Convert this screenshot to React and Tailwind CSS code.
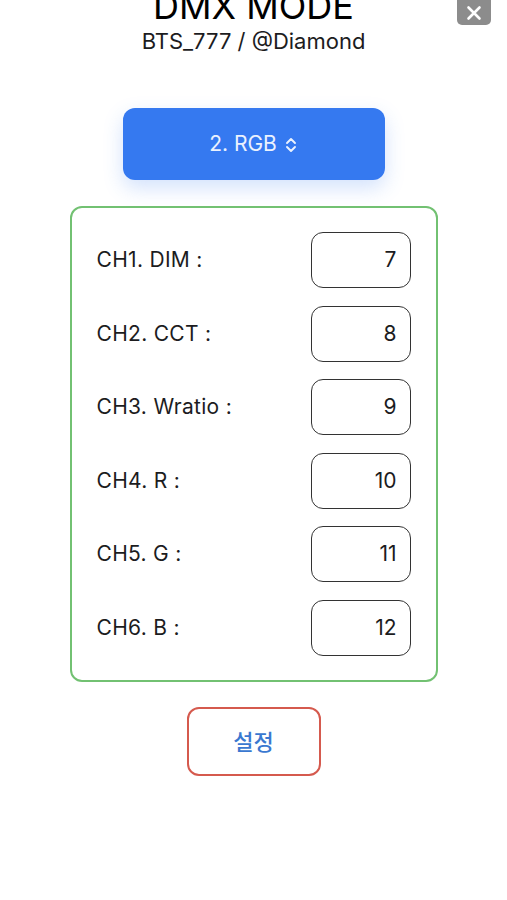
import React from "react";

const rows = [
  ["CH1. DIM :", "7"],
  ["CH2. CCT :", "8"],
  ["CH3. Wratio :", "9"],
  ["CH4. R :", "10"],
  ["CH5. G :", "11"],
  ["CH6. B :", "12"],
];

export default function App() {
  return (
    <div
      className="relative w-[507px] h-[900px] overflow-hidden bg-white text-[#1c1c1e]"
      style={{ fontFamily: "Inter, 'Noto Sans CJK KR', sans-serif" }}
    >
      <div className="absolute top-0 right-[16px] w-[34px] h-[25px] bg-[#8c8c8c] rounded-b-[5px] flex items-center justify-center">
        <svg width="16" height="16" viewBox="0 0 16 16">
          <path d="M2.5 2.5 L13.5 13.5 M13.5 2.5 L2.5 13.5" stroke="white" strokeWidth="2.6" strokeLinecap="round" />
        </svg>
      </div>

      <div className="flex flex-col items-center">
        <div className="mt-[-12px] text-[36px] leading-[36px] text-black">DMX MODE</div>
        <div className="mt-[4px] text-[22px] leading-[26px] text-[#1c1c1e]">BTS_777 / @Diamond</div>

        <button className="mt-[54px] w-[262px] h-[72px] rounded-[12px] bg-[#3579f0] shadow-[0_8px_20px_rgba(53,121,240,0.22)] flex items-center justify-center gap-[7px] text-[21px] text-white/90">
          <span>2. RGB</span>
          <svg width="14" height="18" viewBox="0 0 14 18" className="mt-[1px]">
            <path d="M3 7 L7 3 L11 7 M3 11 L7 15 L11 11" stroke="white" strokeOpacity="0.9" strokeWidth="1.9" fill="none" strokeLinecap="round" strokeLinejoin="round" />
          </svg>
        </button>

        <div className="mt-[26px] w-[368px] rounded-[12px] border-2 border-[#72c172] px-[25px] py-[24px] flex flex-col gap-[17.5px]">
          {rows.map(([label, value]) => (
            <div key={label} className="flex items-center justify-between h-[56px]">
              <span className="text-[21px] tracking-[0.3px] text-[#1c1c1e]">{label}</span>
              <div className="w-[100px] h-[56px] rounded-[12px] border-[1.5px] border-[#333333] flex items-center justify-end pr-[13px] text-[21px] text-[#1c1c1e]">
                {value}
              </div>
            </div>
          ))}
        </div>

        <button className="mt-[25px] w-[134px] h-[69px] rounded-[12px] border-2 border-[#d55a4e] flex items-center justify-center pt-[3px] text-[22px] text-[#3a78d0] font-medium">
          설정
        </button>
      </div>
    </div>
  );
}
